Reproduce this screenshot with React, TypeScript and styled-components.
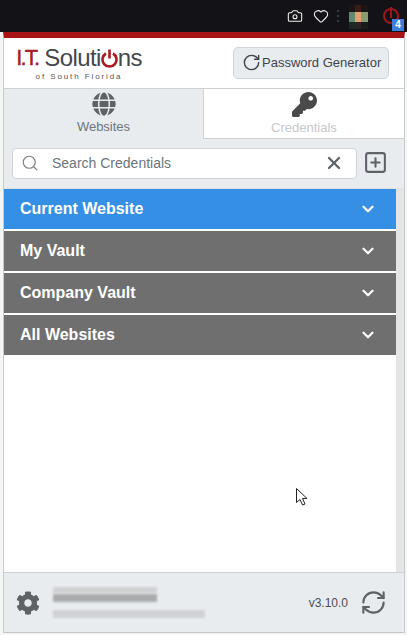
import { Camera, Heart, RotateCw, RefreshCw, Search, X, SquarePlus, ChevronDown } from 'lucide-react';
import { FaGlobe, FaKey, FaCog } from 'react-icons/fa';
import styled, { createGlobalStyle } from 'styled-components';

const GlobalStyle = createGlobalStyle`
    html, body {
        margin: 0;
        padding: 0;
        width: 407px;
        height: 635px;
        overflow: hidden;
        background: #f4f5f5;
    }
    * {
        box-sizing: border-box;
    }
`;

const Page = styled.div`
    position: relative;
    width: 407px;
    height: 635px;
    display: flex;
    flex-direction: column;
    font-family: "Liberation Sans", Arial, sans-serif;
`;

const BrowserBar = styled.div`
    height: 32px;
    flex: none;
    background: #121217;
    display: flex;
    align-items: center;
    justify-content: flex-end;
    color: #f2f2f2;
    padding-right: 8px;
`;

const BarIcon = styled.span`
    display: flex;
    margin-right: 10px;
`;

const Dots = styled.span`
    width: 2px;
    height: 12px;
    margin: 0 10px 0 -2px;
    background: repeating-linear-gradient(#3a3a3c 0 2px, transparent 2px 5px);
`;

const Avatar = styled.svg`
    display: block;
    margin-right: 15px;
    margin-top: 2px;
`;

const ExtensionButton = styled.span`
    position: relative;
    width: 16px;
    height: 16px;
    border: 2px solid #a0161a;
    border-radius: 50%;
    &::after {
        content: '';
        position: absolute;
        left: 5px;
        top: -3px;
        width: 2px;
        height: 11px;
        background: #a0161a;
    }
`;

const Badge = styled.span`
    position: absolute;
    right: -7px;
    top: 9px;
    z-index: 1;
    width: 12px;
    height: 12px;
    background: #3f7fdc;
    color: #fff;
    font-size: 10px;
    font-weight: 700;
    line-height: 12px;
    text-align: center;
`;

const Popup = styled.div`
    flex: none;
    width: 402px;
    height: 601px;
    margin-left: 3px;
    display: flex;
    flex-direction: column;
    border-top: 6px solid #a81417;
    border-right: 1px solid #c9cbcd;
    border-bottom: 1px solid #c4c6c8;
    border-left: 1px solid #c9cbcd;
    background: #fff;
`;

const Header = styled.header`
    height: 51px;
    flex: none;
    display: flex;
    align-items: center;
    justify-content: space-between;
    padding: 0 15px 1px 12px;
    border-bottom: 1px solid #cfd2d4;
`;

const Logo = styled.div`
    display: flex;
    flex-direction: column;
    align-items: center;
    width: 126px;
    margin-top: 1px;
`;

const LogoMain = styled.div`
    display: flex;
    align-items: center;
    font-size: 24px;
    line-height: 26px;
    letter-spacing: -0.6px;
    color: #44474b;
    white-space: nowrap;
`;

const LogoRed = styled.span`
    color: #a81c22;
    margin-right: 6px;
    font-size: 22px;
    letter-spacing: -1.8px;
    -webkit-text-stroke: 0.4px #a81c22;
`;

const PowerGlyph = styled.svg`
    display: block;
`;

const LogoSub = styled.div`
    font-size: 8px;
    line-height: 10px;
    letter-spacing: 1.9px;
    color: #555;
    margin-top: 1px;
`;

const GeneratorButton = styled.button`
    width: 156px;
    height: 32px;
    padding: 0 0 0 8px;
    display: flex;
    align-items: center;
    gap: 1px;
    background: #e9ecef;
    border: 1px solid #ced4da;
    border-radius: 5px;
    color: #3f444a;
    font-family: inherit;
    font-size: 13px;
    white-space: nowrap;
`;

const Tabs = styled.nav`
    height: 50px;
    flex: none;
    display: flex;
`;

const Tab = styled.div<{ $active?: boolean }>`
    width: ${props => props.$active ? '199px' : '201px'};
    display: flex;
    flex-direction: column;
    align-items: center;
    padding-top: 3px;
    background: ${props => props.$active ? '#e9ecef' : '#fff'};
    border-bottom: ${props => props.$active ? 'none' : '1px solid #cfd2d4'};
    border-left: ${props => props.$active ? 'none' : '1px solid #cfd2d4'};
`;

const TabLabel = styled.span<{ $active?: boolean }>`
    font-size: 13px;
    line-height: 16px;
    margin-top: 3px;
    color: ${props => props.$active ? '#6c757d' : '#c6c8ca'};
`;

const SearchRow = styled.div`
    height: 50px;
    flex: none;
    display: flex;
    align-items: flex-start;
    padding: 9px 0 0 8px;
    background: #e9ecef;
    border-bottom: 1px solid #dfe2e5;
`;

const SearchField = styled.div`
    width: 345px;
    height: 31px;
    display: flex;
    align-items: center;
    padding: 0 12px 1px 8px;
    background: #fff;
    border: 1px solid #ced4da;
    border-radius: 4px;
    color: #7d8287;
`;

const SearchText = styled.span`
    flex: 1;
    margin-left: 13px;
    font-size: 14px;
    color: #6c757d;
`;

const AddButton = styled.span`
    display: flex;
    margin: 2px 0 0 6px;
    color: #5f6367;
`;

const Body = styled.div`
    flex: 1;
    display: flex;
    background: #fff;
    min-height: 0;
`;

const Accordion = styled.div`
    flex: 1;
    display: flex;
    flex-direction: column;
    gap: 2px;
`;

const Panel = styled.div<{ $active?: boolean }>`
    height: 40px;
    display: flex;
    align-items: center;
    justify-content: space-between;
    padding: 0 19px 1px 16px;
    background: ${props => props.$active ? '#358fe4' : '#6f6f6f'};
    color: #fff;
    font-size: 16px;
    font-weight: 700;
`;

const ScrollTrack = styled.div`
    width: 8px;
    flex: none;
    background: #e4e5e6;
`;

const Footer = styled.footer`
    height: 60px;
    flex: none;
    display: flex;
    align-items: center;
    padding: 0 17px 0 12px;
    background: #e9ecef;
    border-top: 1px solid #ccd0d3;
    color: #5f6367;
`;

const Account = styled.div`
    flex: 1;
    display: flex;
    flex-direction: column;
    margin-left: 13px;
`;

const BlurLine = styled.div<{ $width: number; $height: number; $tone: string; $gap: number }>`
    width: ${props => props.$width}px;
    height: ${props => props.$height}px;
    margin-top: ${props => props.$gap}px;
    background: ${props => props.$tone};
    filter: blur(1.2px);
`;

const Version = styled.span`
    font-size: 12px;
    color: #4a4e52;
    margin-right: 12px;
`;

const Pointer = styled.svg`
    position: absolute;
    left: 295px;
    top: 487px;
`;

const avatarCols = [
    { x: 0, top: '#1c1416', mid: '#5f8a70', low: '#1c2a24' },
    { x: 6, top: '#3a1c18', mid: '#e6a06e', low: '#2c2420' },
    { x: 12, top: '#1a1416', mid: '#8a9a70', low: '#1a1c1c' },
];

const panels = ['Current Website', 'My Vault', 'Company Vault', 'All Websites'];

export default function App() {
    return (
        <Page>
            <GlobalStyle />
            <BrowserBar>
                <BarIcon><Camera size={16} strokeWidth={1.6} /></BarIcon>
                <BarIcon><Heart size={16} strokeWidth={1.6} /></BarIcon>
                <Dots />
                <Avatar width="19" height="24" viewBox="0 0 19 24" shapeRendering="crispEdges">
                    {avatarCols.map(col => (
                        <g key={col.x}>
                            <rect x={col.x} y="0" width="7" height="7" fill={col.top} />
                            <rect x={col.x} y="7" width="7" height="10" fill={col.mid} />
                            <rect x={col.x} y="17" width="7" height="7" fill={col.low} />
                        </g>
                    ))}
                </Avatar>
                <ExtensionButton><Badge>4</Badge></ExtensionButton>
            </BrowserBar>
            <Popup>
                <Header>
                    <Logo>
                        <LogoMain>
                            <LogoRed>I.T.</LogoRed>Soluti
                            <PowerGlyph width="17" height="20" viewBox="0 0 17 20" fill="none" stroke="#a81c22" strokeWidth="2.6">
                                <path d="M5 5.500a7 7 0 1 0 7 0" />
                                <path d="M8.500 1.500v9" />
                            </PowerGlyph>
                            ns
                        </LogoMain>
                        <LogoSub>of South Florida</LogoSub>
                    </Logo>
                    <GeneratorButton>
                        <RotateCw size={19} strokeWidth={1.8} />
                        Password Generator
                    </GeneratorButton>
                </Header>
                <Tabs>
                    <Tab $active>
                        <FaGlobe size={24} color="#5e6266" />
                        <TabLabel $active>Websites</TabLabel>
                    </Tab>
                    <Tab>
                        <FaKey size={25} color="#4a4a4a" />
                        <TabLabel>Credentials</TabLabel>
                    </Tab>
                </Tabs>
                <SearchRow>
                    <SearchField>
                        <Search size={18} strokeWidth={1.5} />
                        <SearchText>Search Credentials</SearchText>
                        <X size={20} strokeWidth={2.8} color="#5f6367" />
                    </SearchField>
                    <AddButton><SquarePlus size={25} strokeWidth={2} /></AddButton>
                </SearchRow>
                <Body>
                    <Accordion>
                        {panels.map((name, i) => (
                            <Panel key={name} $active={i === 0}>
                                {name}
                                <ChevronDown size={18} strokeWidth={3} />
                            </Panel>
                        ))}
                    </Accordion>
                    <ScrollTrack />
                </Body>
                <Footer>
                    <FaCog size={24} />
                    <Account>
                        <BlurLine $width={104} $height={6} $tone="#cfd1d3" $gap={0} />
                        <BlurLine $width={104} $height={8} $tone="#a9abad" $gap={1} />
                        <BlurLine $width={152} $height={8} $tone="#cfd1d4" $gap={8} />
                    </Account>
                    <Version>v3.10.0</Version>
                    <RefreshCw size={27} strokeWidth={1.9} />
                </Footer>
            </Popup>
            <Pointer width="14" height="20" viewBox="0 0 14 20" fill="#fff" stroke="#222" strokeWidth="1">
                <path d="M1.500 1.500v14l3.500-3 2.500 5.500 2.500-1-2.500-5.500h4.500z" />
            </Pointer>
        </Page>
    );
}
